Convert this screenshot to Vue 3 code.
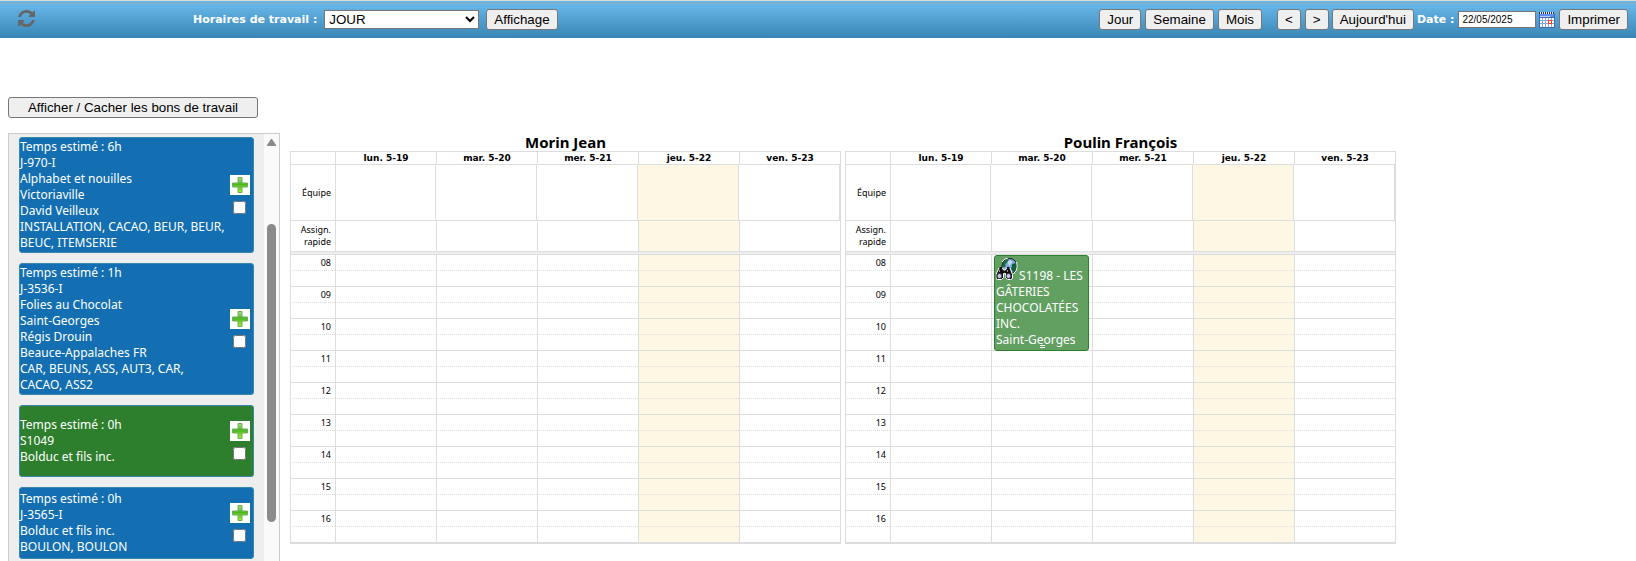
<script setup>
import { ref } from 'vue'

const schedule = ref('JOUR')
const date = ref('22/05/2025')

const orders = ref([
  {
    id: 'J-970-I',
    kind: 'job',
    checked: false,
    lines: ['Temps estimé : 6h', 'J-970-I', 'Alphabet et nouilles', 'Victoriaville', 'David Veilleux', 'INSTALLATION, CACAO, BEUR, BEUR,', 'BEUC, ITEMSERIE'],
  },
  {
    id: 'J-3536-I',
    kind: 'job',
    checked: false,
    lines: ['Temps estimé : 1h', 'J-3536-I', 'Folies au Chocolat', 'Saint-Georges', 'Régis Drouin', 'Beauce-Appalaches FR', 'CAR, BEUNS, ASS, AUT3, CAR,', 'CACAO, ASS2'],
  },
  {
    id: 'S1049',
    kind: 'service',
    checked: false,
    lines: ['Temps estimé : 0h', 'S1049', 'Bolduc et fils inc.'],
  },
  {
    id: 'J-3565-I',
    kind: 'job',
    checked: false,
    lines: ['Temps estimé : 0h', 'J-3565-I', 'Bolduc et fils inc.', 'BOULON, BOULON'],
  },
])

const days = [
  { label: 'lun. 5-19' },
  { label: 'mar. 5-20' },
  { label: 'mer. 5-21' },
  { label: 'jeu. 5-22', today: true },
  { label: 'ven. 5-23' },
]
const hours = ['08', '09', '10', '11', '12', '13', '14', '15', '16']

const people = [
  { name: 'Morin Jean', events: [] },
  {
    name: 'Poulin François',
    events: [{ day: 1, hour: '08', title: 'S1198 - LES GÂTERIES CHOCOLATÉES INC.', place: 'Saint-Georges' }],
  },
]

const eventsAt = (person, day, hour) => person.events.filter((e) => e.day === day && e.hour === hour)
</script>

<template>
  <div class="page">
    <header class="toolbar">
      <button class="refresh" type="button" aria-label="Rafraîchir">
        <svg width="17" height="17" viewBox="0 0 1536 1536" fill="#666">
          <path d="M1511 928q0 5-1 7-64 268-268 434.500T764 1536q-146 0-282.500-55T238 1324l-129 129q-19 19-45 19t-45-19-19-45V960q0-26 19-45t45-19h448q26 0 45 19t19 45-19 45l-137 137q71 66 161 102t187 36q134 0 250-65t186-179q11-17 53-117 8-23 30-23h192q13 0 22.500 9.500t9.500 22.500zm25-800v448q0 26-19 45t-45 19h-448q-26 0-45-19t-19-45 19-45l138-138Q969 256 768 256q-134 0-250 65T332 500q-11 17-53 117-8 23-30 23H50q-13 0-22.500-9.500T18 608v-7q65-268 270-434.500T768 0q146 0 284 55.500T1297 212l130-129q19-19 45-19t45 19 19 45z" />
        </svg>
      </button>
      <div class="group">
        <label class="caption" for="schedule">Horaires de travail :</label>
        <select id="schedule" v-model="schedule" class="schedule">
          <option>JOUR</option>
        </select>
        <button class="btn" type="button">Affichage</button>
      </div>
      <nav class="nav">
        <div class="set views">
          <button class="btn" type="button">Jour</button>
          <button class="btn" type="button">Semaine</button>
          <button class="btn" type="button">Mois</button>
        </div>
        <div class="set">
          <button class="btn" type="button">&lt;</button>
          <button class="btn" type="button">&gt;</button>
        </div>
        <button class="btn" type="button">Aujourd'hui</button>
        <div class="set">
          <label class="caption" for="date">Date :</label>
          <input id="date" v-model="date" class="date" type="text" />
        </div>
        <div class="set">
          <button class="picker" type="button" aria-label="Calendrier">
            <svg width="16" height="16" viewBox="0 0 16 16" shape-rendering="crispEdges">
              <rect x="0" y="2" width="16" height="14" fill="#3f68b5" />
              <rect x="1" y="2" width="14" height="3" fill="#5f8ff0" />
              <rect x="1" y="4" width="10" height="1" fill="#b7cdfb" />
              <path d="M0 0h1v2h-1zM2 0h1v2h-1zM4 0h1v2h-1zM6 0h1v2h-1zM8 0h1v2h-1zM10 0h1v2h-1zM12 0h1v2h-1zM14 0h1v2h-1z" fill="#333" />
              <path d="M1 0h1v2h-1zM3 0h1v2h-1zM5 0h1v2h-1zM7 0h1v2h-1zM9 0h1v2h-1zM11 0h1v2h-1zM13 0h1v2h-1z" fill="#dfe8f5" />
              <rect x="1" y="6" width="14" height="9" fill="#86a6df" />
              <path d="M1 6h2v2h-2zM4 6h2v2h-2zM7 6h2v2h-2zM10 6h2v2h-2zM13 6h2v2h-2zM1 9h2v2h-2zM4 9h2v2h-2zM7 9h2v2h-2zM13 9h2v2h-2zM1 12h2v3h-2zM4 12h2v3h-2zM7 12h2v3h-2zM10 12h2v3h-2zM13 12h2v3h-2z" fill="#fff" />
              <rect x="9" y="8" width="4" height="4" fill="#e8431c" />
              <rect x="10" y="9" width="2" height="2" fill="#fff" />
            </svg>
          </button>
          <button class="btn" type="button">Imprimer</button>
        </div>
      </nav>
    </header>

    <main class="body">
      <button class="btn toggle" type="button">Afficher / Cacher les bons de travail</button>

      <div class="work">
        <aside class="panel">
          <div class="orders">
            <article v-for="order in orders" :key="order.id" class="order" :class="order.kind">
              <div class="lines">
                <div v-for="line in order.lines" :key="line">{{ line }}</div>
              </div>
              <div class="actions">
                <button class="add" type="button" :aria-label="'Ajouter ' + order.id">
                  <svg width="16" height="16" viewBox="0 0 16 16">
                    <defs>
                      <linearGradient id="plus" x1="0" y1="0" x2="0" y2="1">
                        <stop offset="0" stop-color="#a5dc88" />
                        <stop offset="0.450" stop-color="#4fb525" />
                        <stop offset="1" stop-color="#9bf52a" />
                      </linearGradient>
                    </defs>
                    <path d="M6 0.500h4v5.500h5.500v4h-5.500v5.500h-4v-5.500h-5.500v-4h5.500z" fill="url(#plus)" stroke="#6fae58" />
                  </svg>
                </button>
                <input v-model="order.checked" class="check" type="checkbox" :aria-label="'Choisir ' + order.id" />
              </div>
            </article>
          </div>
          <div class="scroll">
            <svg class="arrow" width="9" height="7" viewBox="0 0 9 7"><path d="M4 0h1l4 6v1h-9v-1z" fill="#8b8b8b" /></svg>
            <div class="thumb"></div>
          </div>
        </aside>

        <section v-for="person in people" :key="person.name" class="agenda">
          <h2>{{ person.name }}</h2>
          <table>
            <colgroup>
              <col class="axis-col" />
              <col v-for="d in days" :key="d.label" />
            </colgroup>
            <thead>
              <tr class="head">
                <td></td>
                <th v-for="d in days" :key="d.label" scope="col">{{ d.label }}</th>
              </tr>
            </thead>
            <tbody>
              <tr class="team">
                <th scope="row">Équipe</th>
                <td v-for="d in days" :key="d.label" :class="{ today: d.today }"></td>
              </tr>
              <tr class="quick">
                <th scope="row">Assign.<br />rapide</th>
                <td v-for="d in days" :key="d.label" :class="{ today: d.today }"></td>
              </tr>
              <tr class="divider">
                <td colspan="6"></td>
              </tr>
              <template v-for="h in hours" :key="h">
                <tr class="slot">
                  <th scope="row">{{ h }}</th>
                  <td v-for="(d, i) in days" :key="d.label" :class="{ today: d.today }">
                    <div v-for="e in eventsAt(person, i, h)" :key="e.title" class="event">
                      <svg class="icon" width="22" height="22" viewBox="0 0 22 22">
                        <circle cx="13.500" cy="8" r="7.500" fill="#7fa9e0" stroke="#111" />
                        <path d="M7.500 4q2-3 5-2.500l-1 2.500-2 2v3l-3 0q-0.500-3 1-5z" fill="#1c6b3c" />
                        <path d="M16 6l4-1q1.500 4-0.500 7l-2.500 2-2-3 1-3z" fill="#12603a" />
                        <path d="M11.500 4l3-2 2 2-3 4z" fill="#c4dbf6" />
                        <path d="M6 4q2-3.500 6-4" fill="none" stroke="#fff" />
                        <path d="M20.500 4q1.500 4 0 8l-3 4" fill="none" stroke="#fff" />
                        <path d="M3 10h3.500l1 2h2l1-2h3.500l2.500 6.500v4l-2 1h-3l-2-2v-4h-2v4l-2 2h-4l-1.500-1v-4z" fill="#111" stroke="#fff" />
                        <rect x="3.500" y="9" width="2.500" height="2" fill="#111" />
                        <rect x="11" y="9" width="2.500" height="2" fill="#111" />
                        <path d="M3.500 12v2M11.500 12v2" stroke="#999" />
                        <circle cx="3.500" cy="18" r="2.500" fill="#c3c5f2" stroke="#333" />
                        <circle cx="12.500" cy="18" r="2.500" fill="#c3c5f2" stroke="#333" />
                      </svg>
                      {{ e.title }}<br />{{ e.place }}
                      <span class="grip"></span>
                    </div>
                  </td>
                </tr>
                <tr class="slot half">
                  <th></th>
                  <td v-for="d in days" :key="d.label" :class="{ today: d.today }"></td>
                </tr>
              </template>
            </tbody>
          </table>
        </section>
      </div>
    </main>
  </div>
</template>

<style>
body {
  margin: 0;
  background: #fff;
}
</style>

<style scoped>
.page {
  display: flex;
  flex-direction: column;
  height: 100vh;
  overflow: hidden;
  font-family: Tahoma, "Noto Sans", "DejaVu Sans", sans-serif;
  font-size: 12px;
  color: #000;
}
button,
input,
select {
  margin: 0;
  box-sizing: border-box;
}
.toolbar {
  flex: none;
  display: flex;
  align-items: center;
  height: 38px;
  box-sizing: border-box;
  border-top: 1px solid #d8dcda;
  padding: 0 8px 0 18px;
  background: linear-gradient(#66b5e6 0, #66b5e6 1px, #8fa9b8 2px, #66b5e6 3px, #64b3e4 6px, #3885b5 100%);
}
.refresh,
.picker,
.add {
  display: block;
  padding: 0;
  border: 0;
  background: none;
}
.refresh {
  margin-bottom: 2px;
}
.refresh svg,
.picker svg,
.add svg {
  display: block;
}
.group {
  display: flex;
  align-items: center;
  margin-left: 158px;
}
.caption {
  font: bold 11px "DejaVu Sans", sans-serif;
  color: #fff;
}
.btn {
  height: 21px;
  padding: 0 7px;
  border: 1px solid #767676;
  border-radius: 3px;
  background: #efefef;
  color: #000;
  font-family: "Liberation Sans", Arial, sans-serif;
  line-height: 19px;
  white-space: nowrap;
}
.schedule {
  width: 155px;
  height: 19px;
  margin: 0 7px 0 7px;
  padding: 0;
  border: 1px solid #767676;
  border-radius: 0;
  background: #fff;
  font-family: "Liberation Sans", Arial, sans-serif;
}
.nav {
  display: flex;
  align-items: center;
  gap: 3px;
  margin-left: auto;
}
.set {
  display: flex;
  align-items: center;
  gap: 4px;
}
.views {
  margin-right: 12px;
}
.date {
  width: 78px;
  height: 17px;
  padding: 0 3px;
  border: 1px solid #767676;
  background: #fff;
  font: 10px "Liberation Sans", Arial, sans-serif;
}
.body {
  flex: 1;
  min-height: 0;
  display: flex;
  flex-direction: column;
  align-items: flex-start;
  padding: 59px 8px 0;
}
.toggle {
  flex: none;
  width: 250px;
}
.work {
  flex: 1;
  min-height: 0;
  width: 100%;
  display: flex;
  align-items: stretch;
  margin-top: 15px;
}
.panel {
  flex: none;
  display: flex;
  width: 272px;
  box-sizing: border-box;
  margin-right: 10px;
  border: 1px solid #ccc;
  border-bottom: 0;
  background: #eee;
  overflow: hidden;
}
.orders {
  flex: 1;
  display: flex;
  flex-direction: column;
  gap: 10px;
  padding: 3px 10px 0;
}
.order {
  flex: none;
  display: flex;
  align-items: center;
  justify-content: space-between;
  box-sizing: border-box;
  min-height: 72px;
  padding: 1px 3px 1px 0;
  border: 1px solid #3a87ad;
  border-radius: 3px;
  background: #136fb2;
  color: #fff;
  line-height: 16px;
  white-space: nowrap;
}
.order.service {
  background: #2d7f2d;
}
.lines {
  width: 0;
}
.actions {
  display: flex;
  flex-direction: column;
  align-items: flex-start;
  gap: 6px;
  padding-bottom: 2px;
}
.add {
  padding: 2px;
  background: #fff;
}
.check {
  width: 13px;
  height: 13px;
  margin-left: 3px;
}
.scroll {
  flex: none;
  width: 15px;
  background: #fafafa;
  display: flex;
  flex-direction: column;
  align-items: center;
}
.arrow {
  margin-top: 5px;
}
.thumb {
  width: 9px;
  height: 298px;
  margin-top: 78px;
  border-radius: 5px;
  background: #8b8b8b;
}
.agenda {
  flex: 0 1 551px;
  margin-right: 4px;
}
h2 {
  margin: 0;
  font-size: 15px;
  line-height: 18px;
  text-align: center;
}
table {
  width: 100%;
  table-layout: fixed;
  border-collapse: separate;
  border-spacing: 0;
  border: solid #ddd;
  border-width: 0 1px 2px 0;
  font-size: 9px;
}
.axis-col {
  width: 45px;
}
th,
td {
  box-sizing: border-box;
  padding: 0;
  border: solid #ddd;
  border-width: 1px 0 0 1px;
}
tbody th {
  padding-right: 4px;
  font-weight: normal;
  text-align: right;
}
.today {
  background: #fdf7e3;
}
.head {
  height: 13px;
  font-family: "DejaVu Sans", sans-serif;
  line-height: 12px;
}
.team {
  height: 56px;
}
.team td {
  border-left-color: transparent;
  border-right-width: 1px;
}
.team td:nth-child(2) {
  border-left-color: #ddd;
}
.quick {
  height: 31px;
  line-height: 12px;
}
.divider {
  height: 3px;
}
.divider td {
  background: #eee;
}
.slot {
  height: 16px;
  line-height: 15px;
}
.slot th {
  vertical-align: bottom;
}
.slot td {
  position: relative;
  vertical-align: top;
}
.half th,
.half td {
  border-top-style: dotted;
}
.event {
  position: absolute;
  z-index: 1;
  top: 0;
  left: 2px;
  right: 3px;
  height: 96px;
  box-sizing: border-box;
  padding: 2px 0 0 1px;
  border: 1px solid #2d7f2d;
  border-radius: 3px;
  background: #62a062;
  color: #fff;
  font-size: 12px;
  line-height: 16px;
}
.icon {
  vertical-align: baseline;
  margin-right: -2px;
}
.grip {
  position: absolute;
  bottom: 2px;
  left: 50%;
  width: 5px;
  height: 1px;
  margin-left: -2px;
  border: solid #fff;
  border-width: 1px 0;
}
</style>
